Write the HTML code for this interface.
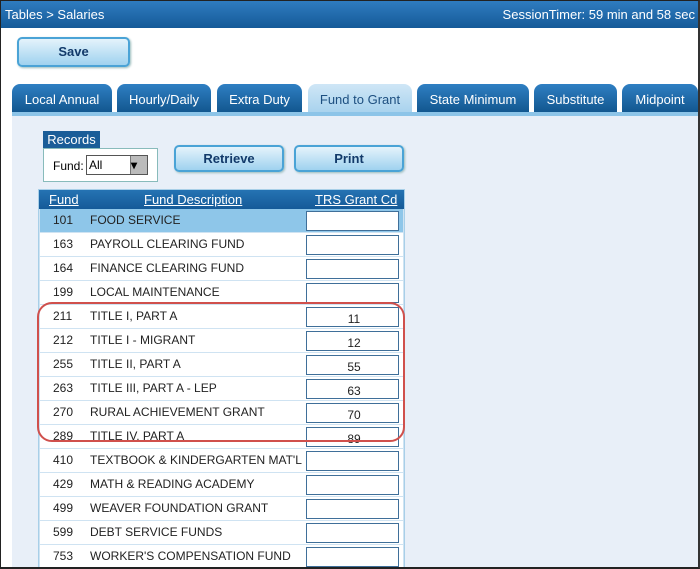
<!DOCTYPE html>
<html><head><style>
*{box-sizing:border-box;margin:0;padding:0}
body{width:700px;height:569px;overflow:hidden;background:#fff;font-family:"Liberation Sans",sans-serif;position:relative}
.frame{position:absolute;left:0;top:0;width:700px;height:569px;border:1px solid #222;border-bottom:2px solid #222;border-right:2px solid #333}
.hdr{position:absolute;left:1px;top:1px;width:697px;height:27px;background:linear-gradient(#2f7cc0,#155a98);color:#fff;font-size:13px;line-height:27px}
.hdr .l{position:absolute;left:4px}.hdr .r{position:absolute;right:3px}
.btn{position:absolute;border:2px solid #4aa3d6;border-radius:5px;background:linear-gradient(#e4f3fb,#9fd2ef);color:#123a6a;font-weight:bold;font-size:13px;text-align:center;box-shadow:1px 1px 2px #9bb}
.tab{position:absolute;top:84px;height:28px;border-radius:8px 8px 0 0;background:linear-gradient(#2f7fc3,#12578f);color:#fff;font-size:13px;line-height:32px;text-align:center}
.tab.on{background:linear-gradient(#cfe6f6,#a9d3ee);color:#1d4f80}
.panel{position:absolute;left:12px;top:112px;width:686px;height:457px;background:#e8eff8;border-top:4px solid #8cc4e8}
.rec{position:absolute;left:43px;top:131px;width:57px;height:18px;background:#1a5d98;color:#fff;font-size:13px;line-height:18px;text-align:center}
.recbox{position:absolute;left:43px;top:148px;width:115px;height:34px;border:1px solid #8bb;background:#fff;font-size:12px}
.sel{position:absolute;left:42px;top:6px;width:62px;height:20px;border:1px solid #555;background:#fff;font-size:12px;line-height:18px;padding-left:2px}
.sel b{position:absolute;right:0;top:0;width:17px;height:18px;background:#bbb;border-left:1px solid #777}
.tbl{position:absolute;left:38px;top:189px;width:367px;height:380px;background:#cfe3f2;border:1px solid #a8cfe8}
.th{position:absolute;left:0;top:0;width:365px;height:19px;background:linear-gradient(#2573b3,#155a98);color:#fff;font-size:13px;line-height:19px}
.th span{position:absolute;text-decoration:underline}
.row{position:absolute;left:1px;width:363px;height:23px;background:#fff;font-size:12px;color:#222;line-height:22px}
.row .n{position:absolute;left:13px}.row .d{position:absolute;left:50px}
.row .in{position:absolute;left:266px;top:2px;width:93px;height:20px;border:1px solid #3f6f99;background:#fff;text-align:center;line-height:23px;padding-left:3px}
.red{position:absolute;left:37px;top:302px;width:368px;height:140px;border:2px solid #d0504c;border-radius:15px}
</style></head><body>
<div class="hdr"><span class="l">Tables &gt; Salaries</span><span class="r">SessionTimer: 59 min and 58 sec</span></div>
<div class="btn" style="left:17px;top:37px;width:113px;height:30px;line-height:26px">Save</div>
<div class="panel"></div>
<div class="tab" style="left:12px;width:100px">Local Annual</div>
<div class="tab" style="left:117px;width:94px">Hourly/Daily</div>
<div class="tab" style="left:217px;width:85px">Extra Duty</div>
<div class="tab on" style="left:308px;width:104px">Fund to Grant</div>
<div class="tab" style="left:417px;width:112px">State Minimum</div>
<div class="tab" style="left:534px;width:83px">Substitute</div>
<div class="tab" style="left:622px;width:76px">Midpoint</div>
<div class="rec">Records</div>
<div class="recbox"><span style="position:absolute;left:9px;top:10px">Fund:</span><div class="sel">All<b>▾</b></div></div>
<div class="btn" style="left:174px;top:145px;width:110px;height:27px;line-height:23px">Retrieve</div>
<div class="btn" style="left:294px;top:145px;width:110px;height:27px;line-height:23px">Print</div>
<div class="tbl">
<div class="th"><span style="left:10px">Fund</span><span style="left:105px">Fund Description</span><span style="left:276px">TRS Grant Cd</span></div>
<div class="row" style="top:19px;background:#8ec6e9"><span class="n">101</span><span class="d">FOOD SERVICE</span><span class="in"></span></div>
<div class="row" style="top:43px"><span class="n">163</span><span class="d">PAYROLL CLEARING FUND</span><span class="in"></span></div>
<div class="row" style="top:67px"><span class="n">164</span><span class="d">FINANCE CLEARING FUND</span><span class="in"></span></div>
<div class="row" style="top:91px"><span class="n">199</span><span class="d">LOCAL MAINTENANCE</span><span class="in"></span></div>
<div class="row" style="top:115px"><span class="n">211</span><span class="d">TITLE I, PART A</span><span class="in">11</span></div>
<div class="row" style="top:139px"><span class="n">212</span><span class="d">TITLE I - MIGRANT</span><span class="in">12</span></div>
<div class="row" style="top:163px"><span class="n">255</span><span class="d">TITLE II, PART A</span><span class="in">55</span></div>
<div class="row" style="top:187px"><span class="n">263</span><span class="d">TITLE III, PART A - LEP</span><span class="in">63</span></div>
<div class="row" style="top:211px"><span class="n">270</span><span class="d">RURAL ACHIEVEMENT GRANT</span><span class="in">70</span></div>
<div class="row" style="top:235px"><span class="n">289</span><span class="d">TITLE IV, PART A</span><span class="in">89</span></div>
<div class="row" style="top:259px"><span class="n">410</span><span class="d">TEXTBOOK &amp; KINDERGARTEN MAT'L</span><span class="in"></span></div>
<div class="row" style="top:283px"><span class="n">429</span><span class="d">MATH &amp; READING ACADEMY</span><span class="in"></span></div>
<div class="row" style="top:307px"><span class="n">499</span><span class="d">WEAVER FOUNDATION GRANT</span><span class="in"></span></div>
<div class="row" style="top:331px"><span class="n">599</span><span class="d">DEBT SERVICE FUNDS</span><span class="in"></span></div>
<div class="row" style="top:355px"><span class="n">753</span><span class="d">WORKER'S COMPENSATION FUND</span><span class="in"></span></div>
</div>
<div class="red"></div>
<div class="frame"></div>
</body></html>
